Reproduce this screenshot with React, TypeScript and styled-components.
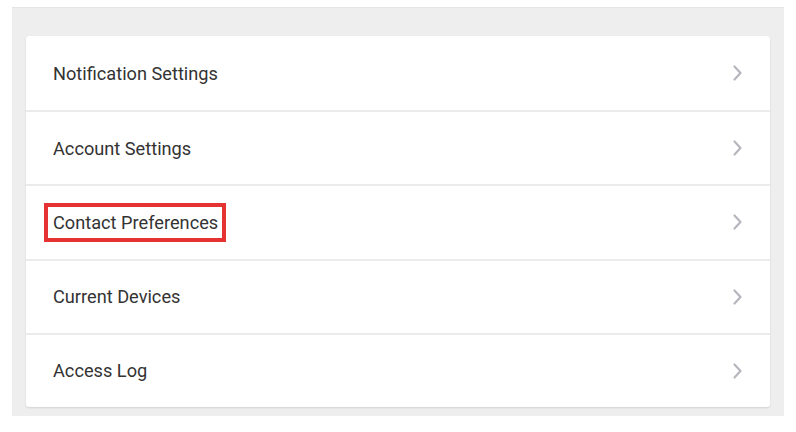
import styled, { createGlobalStyle } from 'styled-components';

const GlobalStyle = createGlobalStyle`
	html, body {
		margin: 0;
		padding: 0;
		background: #fff;
	}
	body {
		font-family: Roboto, 'Liberation Sans', Arial, sans-serif;
	}
`;

const Page = styled.div`
	width: 796px;
	height: 432px;
	padding: 7px 12px 0 12px;
	box-sizing: border-box;
`;

const Panel = styled.div`
	background: #eeeeee;
	border-top: 1px solid #e4e4e4;
	padding: 28px 14px 8px 14px;
	height: 409px;
	box-sizing: border-box;
`;

const Card = styled.ul`
	list-style: none;
	margin: 0;
	padding: 0;
	background: #fff;
	border-radius: 3px;
	box-shadow: 0 1px 2px rgba(0, 0, 0, 0.12);
	overflow: hidden;
`;

const Row = styled.li`
	display: flex;
	align-items: center;
	justify-content: space-between;
	height: 74.2px;
	box-sizing: border-box;
	padding: 0 26px 0 27px;
	border-top: 2px solid #ebebeb;
	cursor: pointer;

	&:first-child {
		border-top: none;
	}
`;

const Label = styled.span<{ $marked?: boolean }>`
	font-size: 18.2px;
	line-height: 21px;
	color: #333333;
	padding: 5px 4px 5px 5px;
	margin-left: -9px;
	border: 4px solid ${(p) => (p.$marked ? '#e53333' : 'transparent')};
`;

const Chevron = () => (
	<svg width="12" height="18" viewBox="0 0 12 18">
		<path
			d="M2.5 2.5 L8.5 9 L2.5 15.5"
			fill="none"
			stroke="#b6b6be"
			strokeWidth="2.2"
			strokeLinecap="round"
			strokeLinejoin="round"
		/>
	</svg>
);

const items = [
	'Notification Settings',
	'Account Settings',
	'Contact Preferences',
	'Current Devices',
	'Access Log',
];

const App = () => (
	<>
		<GlobalStyle />
		<Page>
			<Panel>
				<Card>
					{items.map((item) => (
						<Row key={item}>
							<Label $marked={item === 'Contact Preferences'}>{item}</Label>
							<Chevron />
						</Row>
					))}
				</Card>
			</Panel>
		</Page>
	</>
);

export default App;
